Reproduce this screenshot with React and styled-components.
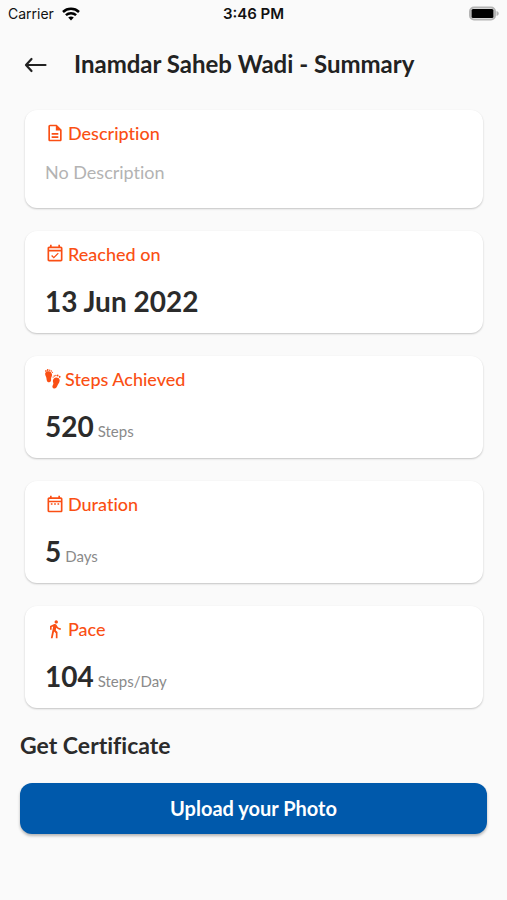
import React from "react";
import styled, { createGlobalStyle } from "styled-components";
import {
  MdDirectionsWalk,
  MdOutlineDateRange,
  MdOutlineDescription,
  MdOutlineEventAvailable,
} from "react-icons/md";

const WifiIcon = () => (
  <svg width="18" height="14" viewBox="0 0 18 14" fill="none" stroke="#000" strokeWidth="2.5" aria-hidden="true">
    <path d="M1 5C5.500 .8 12.500 .8 17 5" />
    <path d="M3.900 8.200C6.800 5.500 11.200 5.500 14.100 8.200" />
    <path d="M6.200 10.500C7.900 9.100 10.100 9.100 11.800 10.500L9 13.500Z" fill="#000" stroke="none" />
  </svg>
);

const BatteryIcon = () => (
  <svg width="31" height="16" viewBox="0 0 31 16" aria-hidden="true">
    <rect x="2" y="1.500" width="25" height="12" rx="4" fill="#fafafa" stroke="#b4b4b4" strokeWidth="2" />
    <rect x="3.500" y="3" width="22" height="9" rx="1.500" fill="#000" />
    <path d="M28.500 5C31.500 6 31.500 9 28.500 10Z" fill="#b4b4b4" />
  </svg>
);

const ArrowIcon = () => (
  <svg
    width="24"
    height="18"
    viewBox="0 0 24 18"
    fill="none"
    stroke="#222"
    strokeWidth="2.2"
    strokeLinecap="round"
    strokeLinejoin="round"
    aria-hidden="true"
  >
    <path d="M21.500 10H2.500M7.500 4L2 10L7.500 16" />
  </svg>
);

const StepsIcon = () => (
  <svg width="17" height="20" viewBox="0 0 17 20" fill="currentColor" aria-hidden="true">
    <path d="M.3 4.100C1.100 1.900 4.800 1.800 6.300 3.800C7.600 5.700 6.900 7.300 6.300 8.600C5.800 9.900 6.400 10.900 5.800 12.200C5 13.900 2.500 13.500 1.900 11.700C1.300 10 1.700 9.200 1 7.800C.3 6.500 -.1 5.300 .3 4.100Z" />
    <ellipse cx=".9" cy="1.900" rx=".8" ry="1" />
    <ellipse cx="2.700" cy="1" rx=".9" ry="1" />
    <circle cx="4.700" cy="1.200" r=".7" />
    <circle cx="6.300" cy="2" r=".7" />
    <circle cx="7.400" cy="3.300" r=".6" />
    <path d="M14.600 10.800C14 8.500 10.500 7.900 8.900 9.500C7.300 11.200 7.900 12.800 8.300 14.100C8.600 15.400 7.500 16.200 7.400 17.600C7.300 19.500 9.900 20.300 11.200 18.800C12.400 17.400 12.200 16.500 13.300 15C14.300 13.600 14.900 12.200 14.600 10.800Z" />
    <ellipse cx="14.700" cy="7.800" rx=".9" ry="1.100" />
    <ellipse cx="12.700" cy="6.600" rx=".8" ry="1" />
    <circle cx="10.900" cy="6.500" r=".7" />
    <circle cx="9.300" cy="7" r=".7" />
    <circle cx="8.100" cy="8.100" r=".6" />
  </svg>
);

const stats = [
  { title: "Reached on", icon: <MdOutlineEventAvailable />, value: "13 Jun 2022" },
  { title: "Steps Achieved", icon: <StepsIcon />, value: "520", unit: "Steps" },
  { title: "Duration", icon: <MdOutlineDateRange />, value: "5", unit: "Days" },
  { title: "Pace", icon: <MdDirectionsWalk />, value: "104", unit: "Steps/Day" },
];

const App = () => {
  return (
    <Screen>
      <GlobalStyle />
      <StatusBar>
        <Carrier>
          Carrier
          <WifiIcon />
        </Carrier>
        <Time>3:46 PM</Time>
        <Battery>
          <BatteryIcon />
        </Battery>
      </StatusBar>

      <Header>
        <BackButton type="button" aria-label="Back">
          <ArrowIcon />
        </BackButton>
        <Title>Inamdar Saheb Wadi - Summary</Title>
      </Header>

      <Cards>
        <Card>
          <CardTitle>
            <MdOutlineDescription />
            Description
          </CardTitle>
          <Description>No Description</Description>
        </Card>
        {stats.map(({ title, icon, value, unit }) => (
          <Card key={title}>
            <CardTitle>
              {icon}
              {title}
            </CardTitle>
            <Stat>
              <Value>{value}</Value>
              {unit && <Unit>{unit}</Unit>}
            </Stat>
          </Card>
        ))}
      </Cards>

      <Certificate>
        <CertificateTitle>Get Certificate</CertificateTitle>
        <UploadButton type="button">Upload your Photo</UploadButton>
      </Certificate>
    </Screen>
  );
};

const GlobalStyle = createGlobalStyle`
  * {
    box-sizing: border-box;
  }

  body {
    margin: 0;
    background-color: #fafafa;
    color: #2b2b2b;
    font-family: Lato, "Open Sans", sans-serif;
    font-variant-ligatures: no-common-ligatures;
  }
`;

const Screen = styled.main`
  min-height: 100vh;
  background-color: #fafafa;
`;

const StatusBar = styled.div`
  display: grid;
  grid-template-columns: 1fr auto 1fr;
  align-items: center;
  height: 27px;
  padding: 0 8px;
  color: #111;
  font-family: Inter, sans-serif;
  font-size: 14px;
`;

const Carrier = styled.span`
  display: flex;
  align-items: center;
  gap: 8px;
`;

const Time = styled.span`
  font-size: 15px;
  font-weight: 600;
`;

const Battery = styled.span`
  display: flex;
  justify-content: flex-end;
`;

const Header = styled.header`
  display: flex;
  align-items: center;
  gap: 26px;
  height: 73px;
  padding: 0 24px;
`;

const BackButton = styled.button`
  display: flex;
  padding: 0;
  border: none;
  background: none;
  cursor: pointer;
`;

const Title = styled.h1`
  margin: 0;
  color: #222;
  font-size: 24px;
  font-weight: 700;
  line-height: 28px;
`;

const Cards = styled.div`
  display: flex;
  flex-direction: column;
  gap: 23px;
  padding: 10px 24px 0 25px;
`;

const Card = styled.section`
  padding: 11px 20px 16px;
  border-radius: 12px;
  background-color: #fff;
  box-shadow: 0 1px 2px rgb(0 0 0 / 22%);
`;

const CardTitle = styled.h2`
  display: flex;
  align-items: center;
  gap: 3px;
  margin: 0;
  color: #fa4f14;
  font-size: 18px;
  font-weight: 500;
  line-height: 24px;

  svg {
    font-size: 20px;
  }
`;

const Description = styled.p`
  margin: 15px 0 8px;
  color: #b3b3b3;
  font-size: 18px;
  line-height: 24px;
`;

const Stat = styled.p`
  display: flex;
  align-items: baseline;
  gap: 4px;
  margin: 19px 0 0;
  line-height: 32px;
`;

const Value = styled.span`
  font-size: 28px;
  font-weight: 700;
`;

const Unit = styled.span`
  color: #8a8a8a;
  font-size: 15px;
  line-height: 20px;
`;

const Certificate = styled.section`
  padding: 23px 20px 24px;
`;

const CertificateTitle = styled.h2`
  margin: 0 0 24px;
  font-size: 23px;
  font-weight: 700;
  line-height: 28px;
`;

const UploadButton = styled.button`
  display: block;
  width: 100%;
  height: 51px;
  padding: 0 16px 2px;
  border: none;
  border-radius: 12px;
  background-color: #0059ab;
  box-shadow: 0 2px 3px rgb(0 0 0 / 28%);
  color: #fff;
  font-family: inherit;
  font-size: 20px;
  font-weight: 700;
  cursor: pointer;
`;

export default App;
